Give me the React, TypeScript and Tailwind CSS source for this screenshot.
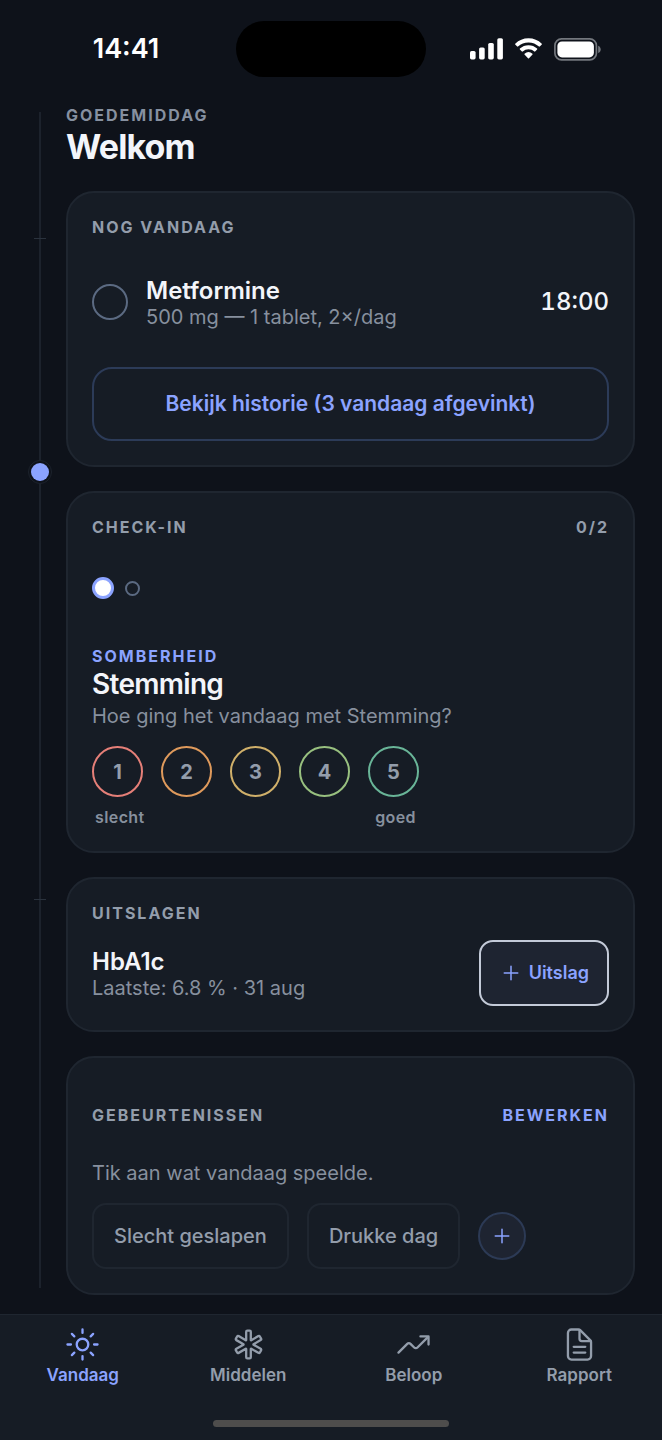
import { useState } from "react";
import type { ReactNode } from "react";
import {
  IoAdd,
  IoDocumentTextOutline,
  IoMedicalOutline,
  IoSunnyOutline,
  IoTrendingUpOutline,
} from "react-icons/io5";

const SCORES = [
  { value: 1, ring: "border-[#e57f78]" },
  { value: 2, ring: "border-[#df9a5c]" },
  { value: 3, ring: "border-[#d0b06a]" },
  { value: 4, ring: "border-[#98c07f]" },
  { value: 5, ring: "border-[#69b598]" },
];

const EVENTS = ["Slecht geslapen", "Drukke dag"];

const TABS = [
  { label: "Vandaag", Icon: IoSunnyOutline },
  { label: "Middelen", Icon: IoMedicalOutline },
  { label: "Beloop", Icon: IoTrendingUpOutline },
  { label: "Rapport", Icon: IoDocumentTextOutline },
];

// Position on the day line, in percent of its height
const TICKS = [10.7, 66.9];
const NOW = 30.6;

const StatusBar = () => (
  <div className="grid grid-cols-[1fr_190px_1fr] items-center pt-[21px] text-white">
    <span className="justify-self-center pl-4 text-[27px] leading-8 font-semibold">
      14:41
    </span>
    <div className="h-14 rounded-full bg-black" />
    <div className="flex items-center gap-[11px] justify-self-center pr-[18px]">
      <svg width="33" height="22" viewBox="0 0 33 22" fill="currentColor">
        <rect x="0" y="13" width="5.6" height="8.4" rx="1.6" />
        <rect x="9.1" y="9.4" width="5.6" height="12" rx="1.6" />
        <rect x="18.2" y="5" width="5.6" height="16.4" rx="1.6" />
        <rect x="27.3" y="0.2" width="5.6" height="21.2" rx="1.6" />
      </svg>
      <svg width="29" height="22" viewBox="0 0 29 22" fill="currentColor">
        <path d="M14.5 4.4c4 0 7.700 1.500 10.500 4.200.2.200.5.200.8 0l2-2.100c.2-.2.2-.6 0-.8A19.200 19.200 0 0 0 14.500.2 19.200 19.200 0 0 0 1.200 5.700c-.2.200-.2.600 0 .8l2 2.100c.2.200.6.200.8 0A15.200 15.200 0 0 1 14.500 4.400z" />
        <path d="M14.500 11.300c2.200 0 4.200.8 5.800 2.200.2.200.6.200.8 0l2-2.100c.3-.2.300-.6 0-.8a12.600 12.600 0 0 0-17.200 0c-.3.200-.3.600 0 .8l2 2.100c.2.200.6.200.8 0a8.700 8.700 0 0 1 5.800-2.200z" />
        <path d="M18.500 15.800c.2.200.2.600 0 .8l-3.500 3.600c-.3.300-.7.300-1 0l-3.500-3.600c-.2-.2-.2-.6 0-.8a6.200 6.200 0 0 1 8 0z" />
      </svg>
      <svg width="47" height="23" viewBox="0 0 47 23" fill="none">
        <rect x="0.900" y="0.900" width="41.500" height="21" rx="6.600" stroke="#73777d" strokeWidth="1.700" />
        <rect x="3.400" y="3.400" width="36.500" height="16" rx="4.600" fill="#fff" />
        <path d="M44.200 7.700c1.500.6 2.500 2 2.500 3.700s-1 3.100-2.500 3.700z" fill="#73777d" />
      </svg>
    </div>
  </div>
);

const DayLine = () => (
  <div className="relative mt-[35px] mb-[26px] w-5 shrink-0">
    <div className="mx-auto h-full w-0.5 bg-[#1c222c]" />
    {TICKS.map((top) => (
      <div
        key={top}
        className="absolute left-1 h-px w-3 bg-[#2a323d]"
        style={{ top: `${top}%` }}
      />
    ))}
    <div
      className="absolute left-1/2 flex size-6 -translate-1/2 items-center justify-center rounded-full border border-[#1c222c] bg-[#0e121a]"
      style={{ top: `${NOW}%` }}
    >
      <div className="size-[18px] rounded-full bg-[#8ba3ff]" />
    </div>
  </div>
);

const Card = ({ children }: { children: ReactNode }) => (
  <section className="rounded-[28px] border-2 border-[#1f2630] bg-[#161c25] p-6">
    {children}
  </section>
);

const Eyebrow = ({ children }: { children: ReactNode }) => (
  <h2 className="text-base leading-5 font-bold tracking-[2px] text-[#939dab] uppercase">
    {children}
  </h2>
);

const App = () => {
  const [taken, setTaken] = useState(false);
  const [score, setScore] = useState<number | null>(null);
  const [selected, setSelected] = useState<string[]>([]);
  const [tab, setTab] = useState("Vandaag");

  const toggleEvent = (name: string) => {
    setSelected((prev) =>
      prev.includes(name) ? prev.filter((n) => n !== name) : [...prev, name]
    );
  };

  return (
    <div className="flex min-h-screen flex-col bg-[#0e121a] font-['Inter',sans-serif] text-[#f3f5fa]">
      <StatusBar />

      <main className="flex grow gap-4 pr-[27px] pl-[30px]">
        <DayLine />

        <div className="flex min-w-0 grow flex-col gap-6 pt-7 pb-[19px]">
          <header className="-mb-0.5">
            <p className="text-base leading-5 font-bold tracking-[2px] text-[#8690a0] uppercase">
              Goedemiddag
            </p>
            <h1 className="text-[34px] leading-[44px] font-bold tracking-tight">
              Welkom
            </h1>
          </header>

          <Card>
            <Eyebrow>Nog vandaag</Eyebrow>
            <div className="flex items-center py-9">
              <input
                id="metformine"
                type="checkbox"
                checked={taken}
                onChange={() => setTaken(!taken)}
                className="size-9 shrink-0 appearance-none rounded-full border-2 border-[#5b6a82] checked:bg-[#8ba3ff]"
              />
              <label htmlFor="metformine" className="grow pt-1 pl-[18px]">
                <span className="block text-2xl leading-[27px] font-semibold">
                  Metformine
                </span>
                <span className="block text-xl leading-[27px] text-[#87909e]">
                  500 mg — 1 tablet, 2×/dag
                </span>
              </label>
              <time className="text-2xl font-medium tabular-nums">18:00</time>
            </div>
            <button
              type="button"
              className="h-[74px] w-full rounded-[20px] border-2 border-[#2c3b58] text-[21px] font-semibold text-[#8ba3ff]"
            >
              Bekijk historie (3 vandaag afgevinkt)
            </button>
          </Card>

          <Card>
            <div className="flex justify-between">
              <Eyebrow>Check-in</Eyebrow>
              <span className="text-base leading-5 font-bold tracking-[2px] text-[#939dab]">
                0/2
              </span>
            </div>
            <div className="mt-10 mb-[47px] flex items-center gap-[11px]">
              <button
                type="button"
                aria-label="Vraag 1"
                className="size-[22px] rounded-full border-[3px] border-[#8ba3ff] bg-white"
              />
              <button
                type="button"
                aria-label="Vraag 2"
                className="size-[15px] rounded-full border-2 border-[#5b6a82]"
              />
            </div>
            <p className="text-base leading-5 font-bold tracking-[2px] text-[#8ba3ff] uppercase">
              Somberheid
            </p>
            <h3 className="text-[28px] leading-9 font-semibold tracking-tight">
              Stemming
            </h3>
            <p className="text-xl leading-7 text-[#87909e]">
              Hoe ging het vandaag met Stemming?
            </p>
            <div className="mt-4 w-fit">
              <div className="flex gap-[18px]">
                {SCORES.map((s) => (
                  <button
                    key={s.value}
                    type="button"
                    aria-pressed={score === s.value}
                    onClick={() => setScore(s.value)}
                    className={`size-[51px] rounded-full border-2 text-xl font-bold text-[#939dab] aria-pressed:bg-[#1e2531] ${s.ring}`}
                  >
                    {s.value}
                  </button>
                ))}
              </div>
              <div className="mt-[10px] flex justify-between px-[3px] text-base leading-5 font-semibold tracking-wide text-[#87909e]">
                <span>slecht</span>
                <span>goed</span>
              </div>
            </div>
          </Card>

          <Card>
            <Eyebrow>Uitslagen</Eyebrow>
            <div className="mt-[17px] flex items-center justify-between">
              <div className="pt-1">
                <h3 className="text-2xl leading-[27px] font-semibold">HbA1c</h3>
                <p className="text-xl leading-[27px] text-[#87909e]">
                  Laatste: 6.8 % · 31 aug
                </p>
              </div>
              <button
                type="button"
                className="flex h-[66px] items-center gap-[6px] rounded-[14px] border-2 border-[#c3cad8] bg-[#1e2431] px-[18px] text-lg font-semibold text-[#8ba3ff]"
              >
                <IoAdd className="size-6" />
                Uitslag
              </button>
            </div>
          </Card>

          <Card>
            <div className="flex h-[66px] items-center justify-between">
              <Eyebrow>Gebeurtenissen</Eyebrow>
              <button
                type="button"
                className="text-base leading-5 font-bold tracking-[2px] text-[#8ba3ff] uppercase"
              >
                Bewerken
              </button>
            </div>
            <p className="mt-[11px] text-xl leading-7 text-[#87909e]">
              Tik aan wat vandaag speelde.
            </p>
            <div className="mt-4 flex items-center gap-[18px]">
              {EVENTS.map((name) => (
                <button
                  key={name}
                  type="button"
                  aria-pressed={selected.includes(name)}
                  onClick={() => toggleEvent(name)}
                  className="h-[66px] rounded-[14px] border-2 border-[#1f2630] px-5 text-xl font-medium text-[#939dab] aria-pressed:border-[#8ba3ff]"
                >
                  {name}
                </button>
              ))}
              <button
                type="button"
                aria-label="Gebeurtenis toevoegen"
                className="flex size-12 items-center justify-center rounded-full border-2 border-[#2c3a55] bg-[#1e2431] text-[#8ba3ff]"
              >
                <IoAdd className="size-6" />
              </button>
            </div>
          </Card>
        </div>
      </main>

      <nav className="border-t border-[#1f2630] bg-[#161c25] pt-[11px] pb-[13px]">
        <div className="grid grid-cols-4">
          {TABS.map(({ label, Icon }) => (
            <button
              key={label}
              type="button"
              onClick={() => setTab(label)}
              className={`flex flex-col items-center text-[17px] leading-6 font-semibold ${
                tab === label ? "text-[#8ba3ff]" : "text-[#939dab]"
              }`}
            >
              <Icon className="size-[37px]" />
              {label}
            </button>
          ))}
        </div>
        <div className="mx-auto mt-[33px] h-[7px] w-[236px] rounded-full bg-[#4e4d4c]" />
      </nav>
    </div>
  );
};

export default App;
